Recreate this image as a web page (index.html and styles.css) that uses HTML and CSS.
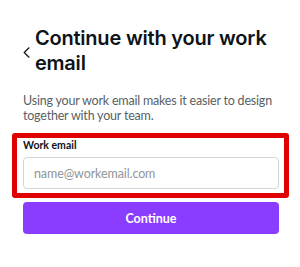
FILE: index.html
```html
<!DOCTYPE html>
<html lang="en">
<head>
<meta charset="utf-8">
<title>Continue with your work email</title>
<link rel="stylesheet" href="styles.css">
</head>
<body>
<main class="page">
  <header class="head">
    <button class="back" type="button" aria-label="Back">
      <svg width="7" height="11" viewBox="0 0 7 11" aria-hidden="true"><path d="M6 0.8 L1.2 5.5 L6 10.2" fill="none" stroke="#0e1318" stroke-width="1.2" stroke-linecap="round" stroke-linejoin="round"/></svg>
    </button>
    <h1 class="title">Continue with your work email</h1>
  </header>
  <p class="lead">Using your work email makes it easier to design together with your team.</p>
  <div class="highlight">
    <label class="label" for="email">Work email</label>
    <input class="input" id="email" type="email" placeholder="name@workemail.com">
  </div>
  <button class="primary" type="button">Continue</button>
</main>
</body>
</html>
```
FILE: styles.css
```css
html, body {
  margin: 0;
  padding: 0;
  background: #ffffff;
}
body {
  font-family: Lato, "Noto Sans", sans-serif;
  color: #0e1318;
}
.page {
  padding: 26px 21px 0 23px;
  display: flex;
  flex-direction: column;
}
.head {
  display: flex;
  align-items: flex-start;
}
.back {
  width: 14px;
  height: 26px;
  margin: 13px 0 0 0;
  padding: 0;
  border: 0;
  background: none;
  display: flex;
  align-items: center;
  justify-content: flex-start;
}
.back svg { display: block; }
.title {
  margin: 0;
  font-family: Inter, "Noto Sans", sans-serif;
  font-weight: 600;
  font-size: 20px;
  line-height: 25px;
  letter-spacing: -0.2px;
  color: #0e1318;
}
.lead {
  margin: 17px 0 0 0;
  font-size: 12.5px;
  line-height: 15px;
  letter-spacing: -0.2px;
  color: #585f66;
}
.highlight {
  margin: 10px -10px 0 -11px;
  border: 5px solid #e10000;
  border-radius: 3px;
  padding: 1px 5px 4px 6px;
  display: flex;
  flex-direction: column;
}
.label {
  font-size: 10.5px;
  line-height: 13px;
  font-weight: 700;
  color: #0e1318;
  margin-bottom: 5px;
}
.input {
  box-sizing: border-box;
  height: 32px;
  width: 100%;
  margin: 0;
  border: 1px solid #d3d5d7;
  border-radius: 4px;
  padding: 0 10px;
  font-family: Lato, "Noto Sans", sans-serif;
  font-size: 12.5px;
  letter-spacing: -0.1px;
  color: #0e1318;
  background: #fff;
}
.input::placeholder { color: #8f959a; }
.primary {
  margin: 4px 0 0 0;
  height: 32px;
  border: 0;
  border-radius: 4px;
  background: #8b3dff;
  color: #fff;
  font-family: Lato, "Noto Sans", sans-serif;
  font-weight: 700;
  font-size: 12.5px;
}
```
